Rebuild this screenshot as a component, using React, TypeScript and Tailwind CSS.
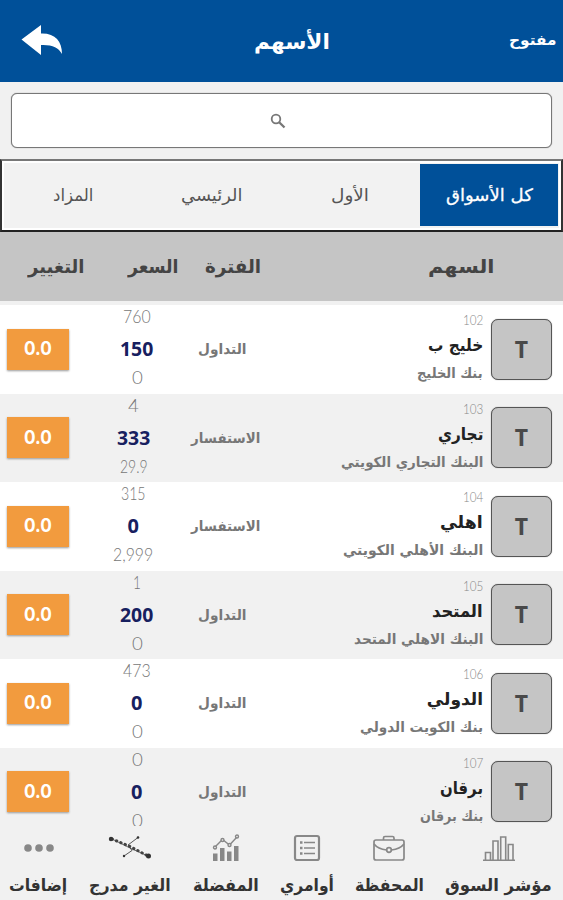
import { useLayoutEffect, useRef, useState, type ReactNode } from 'react';

const AR = "font-['DejaVu_Sans',sans-serif]";
const NUM = "font-[Lato,sans-serif] font-light";

/** Single-line text squeezed or stretched to a given width. */
function Fit({ w, className = '', children }: { w: number; className?: string; children: ReactNode }) {
  const ref = useRef<HTMLSpanElement>(null);
  const [scale, setScale] = useState(1);
  useLayoutEffect(() => {
    if (ref.current) setScale(w / ref.current.offsetWidth);
  }, [w]);
  return (
    <span className="flex shrink-0 justify-start" style={{ width: w }}>
      <span
        ref={ref}
        className={`block shrink-0 origin-right whitespace-nowrap ${className}`}
        style={{ transform: `scaleX(${scale})` }}
      >
        {children}
      </span>
    </span>
  );
}

type Stock = {
  code: string; name: string; nameW: number; desc: string; descW: number;
  query?: boolean; top: string; topW: number; price: string; priceW: number; low: string; lowW: number;
};

const stocks: Stock[] = [
  { code: '102', name: 'خليج ب', nameW: 55, desc: 'بنك الخليج', descW: 66, top: '760', topW: 28, price: '150', priceW: 33, low: '0', lowW: 11 },
  { code: '103', name: 'تجاري', nameW: 45, desc: 'البنك التجاري الكويتي', descW: 142, query: true, top: '4', topW: 11, price: '333', priceW: 33, low: '29.9', lowW: 28 },
  { code: '104', name: 'اهلي', nameW: 43, desc: 'البنك الأهلي الكويتي', descW: 140, query: true, top: '315', topW: 25, price: '0', priceW: 11, low: '2,999', lowW: 40 },
  { code: '105', name: 'المتحد', nameW: 51, desc: 'البنك الاهلي المتحد', descW: 129, top: '1', topW: 8, price: '200', priceW: 33, low: '0', lowW: 11 },
  { code: '106', name: 'الدولي', nameW: 56, desc: 'بنك الكويت الدولي', descW: 123, top: '473', topW: 28, price: '0', priceW: 11, low: '0', lowW: 11 },
  { code: '107', name: 'برقان', nameW: 43, desc: 'بنك برقان', descW: 63, top: '0', topW: 11, price: '0', priceW: 11, low: '0', lowW: 11 },
];

function StockRow({ s }: { s: Stock }) {
  return (
    <div className="flex h-[88.5px] shrink-0 items-center pr-[11px] odd:bg-white even:bg-[#f1f1f1]">
      <div className="flex size-[61px] shrink-0 items-center justify-center rounded-[7px] border border-[#555] bg-[#c5c5c5] shadow-[0_0_1px_#777]">
        <span className="font-['Noto_Sans',sans-serif] text-[23px] leading-none font-bold text-[#494949]">T</span>
      </div>
      <div className="mr-2 flex h-full w-[190px] shrink-0 flex-col items-start">
        <Fit w={20} className={`${NUM} mt-[7px] h-4 text-[14px] leading-4 text-[#888]`}>{s.code}</Fit>
        <Fit w={s.nameW} className={`${AR} mt-[5px] h-6 text-[17px] leading-6 font-bold text-[#222]`}>{s.name}</Fit>
        <Fit w={s.descW} className={`${AR} mt-[6px] h-5 text-[14px] leading-5 font-bold text-[#777]`}>{s.desc}</Fit>
      </div>
      <div className={`flex w-[80px] shrink-0 justify-center ${s.query ? 'mr-[27.5px]' : 'mr-[30.5px]'}`}>
        <Fit w={s.query ? 69 : 49} className={`${AR} text-[14px] leading-5 font-bold text-[#777]`}>
          {s.query ? 'الاستفسار' : 'التداول'}
        </Fit>
      </div>
      <div className={`flex h-full w-[60px] shrink-0 flex-col items-center ${s.query ? 'mr-[22px]' : 'mr-[15.5px]'}`}>
        <Fit w={s.topW} className={`${NUM} mt-[2px] h-5 text-[17px] leading-5 text-[#777]`}>{s.top}</Fit>
        <Fit w={s.priceW} className="mt-[10px] h-6 font-['Noto_Sans',sans-serif] text-[20px] leading-6 font-bold text-[#17205f]">{s.price}</Fit>
        <Fit w={s.lowW} className={`${NUM} mt-[7px] h-5 text-[17px] leading-5 text-[#777]`}>{s.low}</Fit>
      </div>
      <div className="mr-auto ml-[7px] flex h-[41px] w-[62px] shrink-0 items-center justify-center bg-[#f29b3e] shadow-[0_1px_2px_#999]">
        <Fit w={28} className="font-[Inter,sans-serif] text-[19px] leading-6 font-bold text-white">0.0</Fit>
      </div>
    </div>
  );
}

function Tab({ label, w, active }: { label: string; w: number; active?: boolean }) {
  return (
    <div className={`${AR} flex h-[62px] w-[138.5px] shrink-0 items-center justify-center ${active ? 'bg-[#005099] text-white' : 'text-[#555]'}`}>
      <Fit w={w} className={active ? 'text-[17px] leading-6 [-webkit-text-stroke:0.3px_white]' : 'text-[17px] leading-6'}>{label}</Fit>
    </div>
  );
}

const bars = (
  <svg width="34" height="28" viewBox="0 0 34 28" fill="none" stroke="#888" strokeWidth="1.6">
    <path d="M1 26.3H33M3.5 26V18.5H8.5V26M11 26V7H16V26M18.7 26V3H23.7V26M26.3 26V10.5H31V26" />
  </svg>
);
const briefcase = (
  <svg width="32" height="28" viewBox="0 0 32 28" fill="none" stroke="#888" strokeWidth="1.7">
    <rect x="1" y="6" width="30" height="20" rx="2" />
    <path d="M10.5 6V4Q10.5 2.5 12 2.5H19.5Q21 2.5 21 4V6M1 10Q5 15 13.5 16M18.5 16Q27 15 31 10" />
    <circle cx="16" cy="16" r="2.3" />
  </svg>
);
const orders = (
  <svg width="28" height="28" viewBox="0 0 28 28" fill="none" stroke="#888">
    <rect x="2" y="2" width="24" height="24" rx="2" strokeWidth="2.2" />
    <path d="M11 8.5H22M11 14H22M11 19.5H22" strokeWidth="1.3" />
    <path d="M7 8.5H9.5M7 14H9.5M7 19.5H9.5" strokeWidth="2.3" />
  </svg>
);
const favourites = (
  <svg width="28" height="28" viewBox="0 0 28 28" fill="#888">
    <path d="M1 19.500H5.500V27H1zM8 14H12.500V27H8zM15 17.500H19.500V27H15zM22 12H26.500V27H22z" />
    <g fill="#f1f1f1" stroke="#888" strokeWidth="1.4">
      <path d="M3 13L10.500 5.500L17.500 11L25 3" fill="none" />
      <circle cx="3" cy="13.500" r="1.500" /><circle cx="10.500" cy="6" r="1.500" /><circle cx="17.500" cy="11" r="1.500" /><circle cx="25" cy="2.500" r="1.500" />
    </g>
  </svg>
);
const unlisted = (
  <svg width="46" height="28" viewBox="0 0 46 28" fill="none" stroke="#444" strokeLinecap="round">
    <path d="M5 5L23 12.500L41 22" strokeWidth="3" strokeDasharray="0.5 4.200" />
    <path d="M5 5L24 14.500L41 22" strokeWidth="0.8" />
    <path d="M31 3.500L21 11L25 16.500L17 22" strokeWidth="0.9" />
    <g fill="#333" stroke="none"><circle cx="4" cy="5" r="2.200" /><circle cx="41.500" cy="22" r="2.500" /><circle cx="31" cy="3.500" r="1.300" /><circle cx="17" cy="22" r="1.200" /></g>
  </svg>
);
const more = (
  <svg width="30" height="28" viewBox="0 0 30 28" fill="#888">
    <circle cx="4" cy="14" r="3.800" /><circle cx="15" cy="14" r="3.800" /><circle cx="26" cy="14" r="3.800" />
  </svg>
);

function NavItem({ label, w, box, icon }: { label: string; w: number; box: string; icon: ReactNode }) {
  return (
    <div className={`flex shrink-0 flex-col items-center ${box}`}>
      <div className="flex h-7 items-center">{icon}</div>
      <Fit w={w} className={`${AR} mt-[11px] h-6 text-[17px] leading-6 font-bold text-[#333]`}>{label}</Fit>
    </div>
  );
}

export default function App() {
  return (
    <div dir="rtl" className={`${AR} flex h-[900px] w-[563px] flex-col overflow-hidden bg-[#f1f1f1]`}>
      <header className="flex h-[82px] shrink-0 items-center bg-[#005099] pb-0.5 text-white">
        <div className="flex w-[188px] pr-[7px]"><Fit w={47} className="text-[15px] leading-6 font-bold">مفتوح</Fit></div>
        <div className="mt-1 flex w-[166px] justify-center"><Fit w={76} className="text-[21px] leading-8 font-bold">الأسهم</Fit></div>
        <div className="mr-auto ml-[21px]">
          <svg width="42" height="32" viewBox="0 0 42 32" fill="#fff">
            <path d="M0.5 15.5L20 1V9.5C34 9 41 17 41 30C37.5 23.5 31 20.5 20 21V31Z" />
          </svg>
        </div>
      </header>

      <div className="mx-[11px] mt-[11px] flex h-[55px] shrink-0 items-center justify-center rounded-md border border-[#777] bg-white shadow-[0_0_1px_#777]">
        <svg className="mt-px mr-[6px]" width="17" height="17" viewBox="0 0 17 17" fill="none" stroke="#777">
          <circle cx="6" cy="6" r="4.3" strokeWidth="1.8" />
          <path d="M9.2 9.2L14.5 14.5" strokeWidth="2.3" />
        </svg>
      </div>

      <div className="mt-[11px] flex h-[73px] shrink-0 border-2 border-t-[#777] border-r-[#333] border-b-[#222] border-l-[#333] bg-[#f2f2f2] pt-[3px] pr-[3px] shadow-[inset_0_0_0_2px_#fff]">
        <Tab label="كل الأسواق" w={87} active />
        <Tab label="الأول" w={38} />
        <Tab label="الرئيسي" w={61} />
        <Tab label="المزاد" w={40} />
      </div>

      <div className="flex h-[69px] shrink-0 items-center bg-[#c5c5c5] pr-[69px] pb-px text-[19px] leading-7 font-bold text-[#444]">
        <Fit w={66}>السهم</Fit>
        <div className="mr-[167px]"><Fit w={56}>الفترة</Fit></div>
        <div className="mr-[26px]"><Fit w={51}>السعر</Fit></div>
        <div className="mr-[44px]"><Fit w={56}>التغيير</Fit></div>
      </div>

      <main className="mt-1 flex h-[521px] shrink-0 flex-col overflow-hidden bg-white">
        {stocks.map((s) => <StockRow key={s.code} s={s} />)}
      </main>

      <nav className="flex grow bg-[#f1f1f1] pt-[8px]">
        <NavItem label="مؤشر السوق" w={107} box="w-[129px]" icon={bars} />
        <NavItem label="المحفظة" w={69} box="w-[90px]" icon={briefcase} />
        <NavItem label="أوامري" w={54} box="w-[75px]" icon={orders} />
        <NavItem label="المفضلة" w={66} box="w-[86px]" icon={favourites} />
        <NavItem label="الغير مدرج" w={82} box="w-[106px]" icon={unlisted} />
        <NavItem label="إضافات" w={58} box="w-[77px]" icon={more} />
      </nav>
    </div>
  );
}
